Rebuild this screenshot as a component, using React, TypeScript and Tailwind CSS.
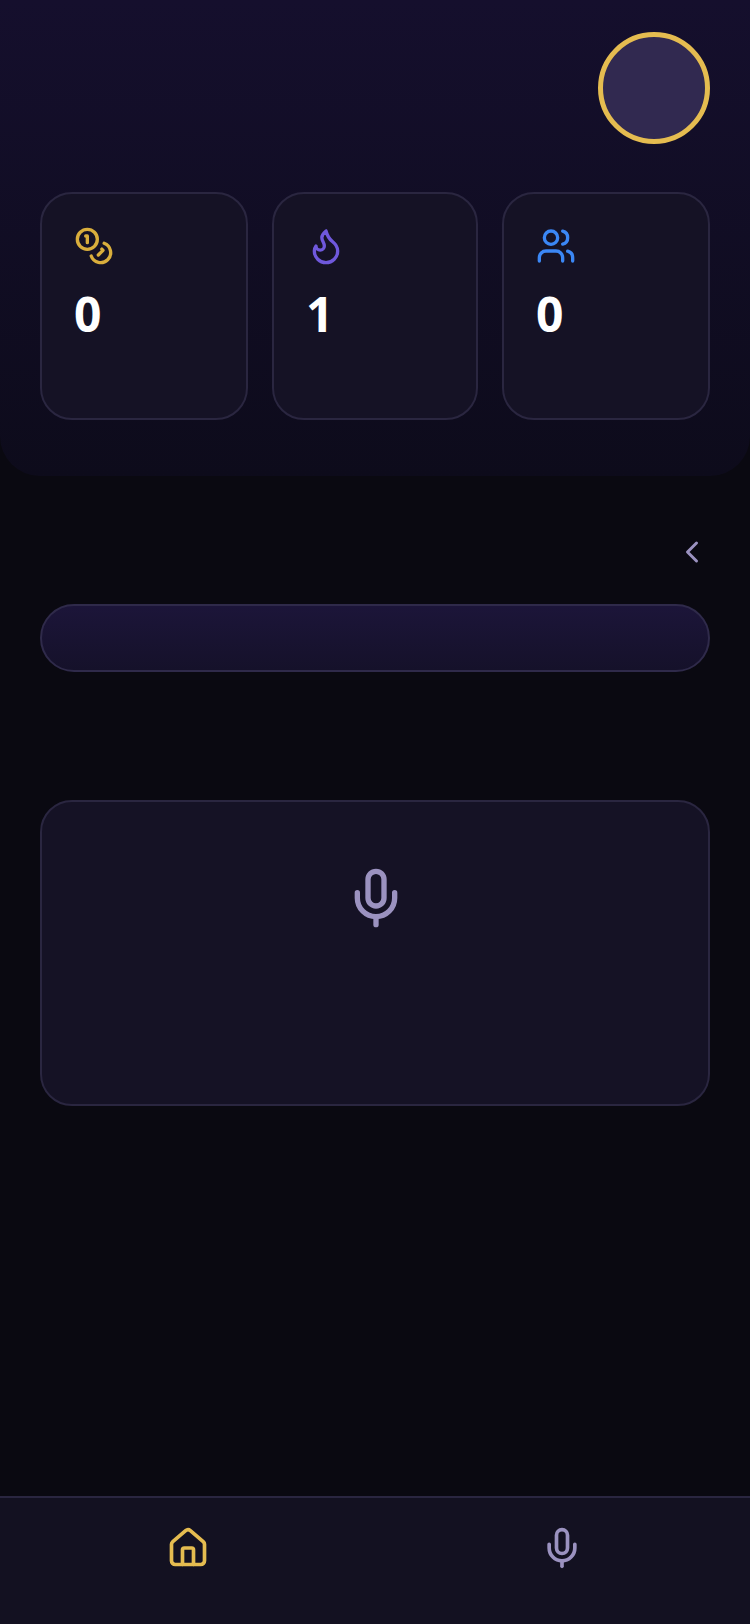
import { ChevronLeft, Coins, Flame, House, Mic, Users } from 'lucide-react';

const stats = [
    { icon: Coins, color: 'text-[#d9ae3c]', value: '0' },
    { icon: Flame, color: 'text-[#6f58dc]', value: '1' },
    { icon: Users, color: 'text-[#3b87f5]', value: '0' },
];

export default function App() {
    return (
        <div className="flex h-[1624px] w-[750px] flex-col overflow-hidden bg-[#0a0911] font-['Noto_Sans',sans-serif]">
            <header className="h-[476px] rounded-b-[40px] bg-gradient-to-b from-[#150f2d] to-[#0d0b1b] px-10 pt-8">
                <div className="flex justify-end">
                    <div className="h-28 w-28 rounded-full border-[5px] border-[#e5bc50] bg-[#312950]" />
                </div>
                <div className="mt-12 grid grid-cols-[208px_206px_208px] gap-6">
                    {stats.map((stat, i) => (
                        <div key={i} className="h-[228px] rounded-[32px] border-2 border-[#2a2640] bg-[#151225] p-8">
                            <stat.icon size={40} strokeWidth={2} className={stat.color} />
                            <div className="mt-[18px] text-5xl leading-[60px] font-bold text-white">{stat.value}</div>
                        </div>
                    ))}
                </div>
            </header>

            <main className="flex-1 px-10 pt-[58px]">
                <div className="flex justify-end">
                    <ChevronLeft size={36} strokeWidth={2} className="text-[#9b92c0]" />
                </div>
                <div className="mt-[34px] h-[68px] rounded-[34px] border-2 border-[#2f2a4a] bg-gradient-to-b from-[#1c1539] to-[#15112a]" />
                <div className="mt-32 flex h-[306px] justify-center rounded-[32px] border-2 border-[#2a2640] bg-[#151225] pt-16 pl-0.5">
                    <Mic size={64} strokeWidth={2} className="text-[#9b92c0]" />
                </div>
            </main>

            <nav className="grid h-[128px] grid-cols-2 border-t-2 border-[#2a2640] bg-[#131121] pt-7">
                <div className="flex justify-center">
                    <House size={44} strokeWidth={2} className="text-[#e5bc50]" />
                </div>
                <div className="flex justify-center pr-0.5">
                    <Mic size={44} strokeWidth={2} className="text-[#9b92c0]" />
                </div>
            </nav>
        </div>
    );
}
